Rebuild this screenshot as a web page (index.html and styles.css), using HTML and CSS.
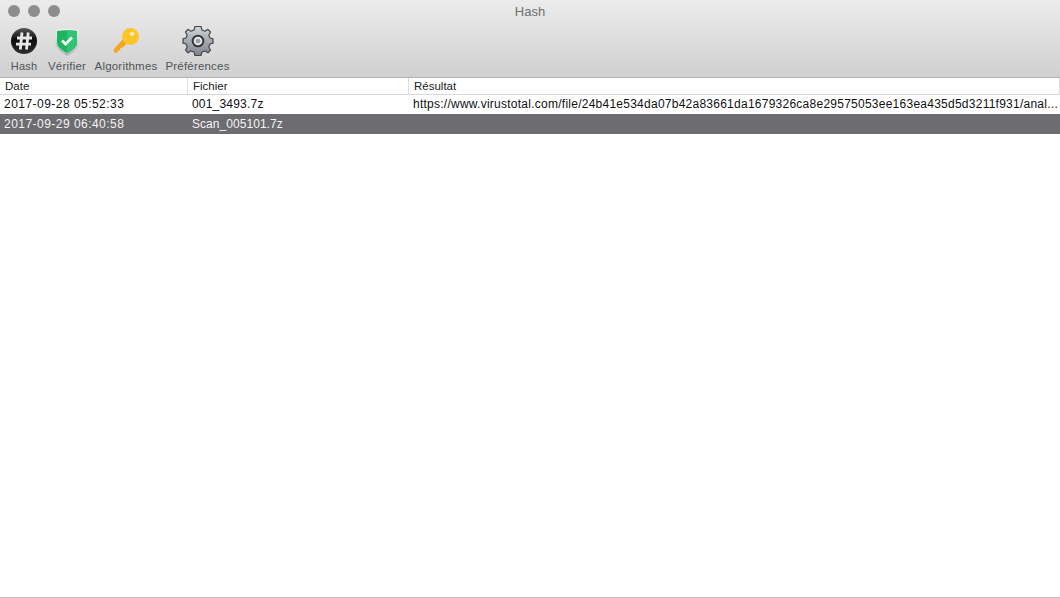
FILE: index.html
```html
<!DOCTYPE html>
<html lang="fr">
<head>
<meta charset="utf-8">
<title>Hash</title>
<link rel="stylesheet" href="styles.css">
</head>
<body>
<div class="window">
  <header class="chrome">
    <div class="titlebar">
      <div class="lights"><span class="light"></span><span class="light"></span><span class="light"></span></div>
      <div class="title">Hash</div>
    </div>
    <div class="toolbar">
      <div class="tool tool-hash">
        <svg class="icon" width="26" height="26" viewBox="0 0 26 26">
          <defs><linearGradient id="gb" x1="0" y1="0" x2="0" y2="1"><stop offset="0" stop-color="#585858"/><stop offset="0.45" stop-color="#0c0c0c"/><stop offset="1" stop-color="#303030"/></linearGradient></defs>
          <circle cx="13" cy="13" r="13" fill="url(#gb)"/>
          <path d="M11 4.500 9.300 21.500M17.200 4.500 15.500 21.500M6 10H21M5 16.200H20" stroke="#e8e8e8" stroke-width="2.800" fill="none"/>
        </svg>
        <span class="label">Hash</span>
      </div>
      <div class="tool tool-verify">
        <svg class="icon" width="24" height="28" viewBox="0 0 24 28">
          <defs><linearGradient id="gs" x1="0" y1="0" x2="0" y2="1"><stop offset="0" stop-color="#f0f1f2"/><stop offset="1" stop-color="#aeb4b8"/></linearGradient></defs>
          <path d="M0.500 1.500Q12 -.5 23.500 1.500V15C23.500 21 17 25 12 28 7 25 .5 21 .5 15Z" fill="url(#gs)"/>
          <path d="M2 3Q12 1.500 22 3V14.500C22 19 16.500 22.500 12 25 7.500 22.500 2 19 2 14.500Z" fill="#1db45e"/>
          <path d="M12 2.250Q17 2.250 22 3V14.500C22 19 16.500 22.500 12 25Z" fill="#2fc374"/>
          <path d="M7 12.500 10.500 16 17 9.500" stroke="#f4f7f4" stroke-width="2.800" fill="none"/>
        </svg>
        <span class="label">Vérifier</span>
      </div>
      <div class="tool tool-algo">
        <svg class="icon" width="26" height="25" viewBox="0 0 26 25">
          <path d="M10 11 .5 21.500 1.500 25 4.500 24.500 5 22.500 7 22.500 7.500 20 9.500 19.500 14.500 15Z" fill="#f2a81c"/>
          <circle cx="17.500" cy="8.500" r="8.500" fill="#fdc527"/>
          <ellipse cx="19" cy="5.800" rx="2.500" ry="1.900" fill="#fcefc4"/>
        </svg>
        <span class="label">Algorithmes</span>
      </div>
      <div class="tool tool-prefs">
        <svg class="icon" width="32" height="32" viewBox="0 0 32 32">
          <defs><linearGradient id="gg" x1="0" y1="0" x2="0" y2="1"><stop offset="0" stop-color="#d2d6da"/><stop offset="0.5" stop-color="#a4aab0"/><stop offset="1" stop-color="#80868c"/></linearGradient></defs>
          <path d="M13 1.500H19L20 5 23 6.300 26 4.300 28.500 7 26.800 10.300 28 13 31 13.800V18.200L28 19 26.800 22 28.500 25.200 26 27.800 23 26 20 27 19 30.500H13L12 27 9 26 6 27.800 3.500 25.200 5.200 22 4 19 1 18.200V13.800L4 13 5.200 10.300 3.500 7 6 4.300 9 6.300 12 5Z" fill="url(#gg)" stroke="#44484e" stroke-width="1.200" stroke-linejoin="round"/>
          <circle cx="16" cy="16" r="6.300" fill="#33373c"/>
          <circle cx="16" cy="16" r="4.300" fill="#f0f1f2"/>
          <circle cx="16" cy="16" r="2.500" fill="#9aa0a6"/>
        </svg>
        <span class="label">Préférences</span>
      </div>
    </div>
  </header>
  <main class="table">
    <div class="row head">
      <div class="cell c-date">Date</div>
      <div class="cell c-file">Fichier</div>
      <div class="cell c-res">Résultat</div>
    </div>
    <div class="row item">
      <div class="cell c-date">2017-09-28 05:52:33</div>
      <div class="cell c-file">001_3493.7z</div>
      <div class="cell c-res">https://www.virustotal.com/file/24b41e534da07b42a83661da1679326ca8e29575053ee163ea435d5d3211f931/anal...</div>
    </div>
    <div class="row item selected">
      <div class="cell c-date">2017-09-29 06:40:58</div>
      <div class="cell c-file">Scan_005101.7z</div>
      <div class="cell c-res"></div>
    </div>
  </main>
</div>
</body>
</html>
```
FILE: styles.css
```css
* { box-sizing: border-box; }
html, body { margin: 0; height: 100%; background: #fff; }
body { font-family: "Liberation Sans", Arial, sans-serif; color: #111; overflow: hidden; }
.window { height: 598px; display: flex; flex-direction: column; border-bottom: 1px solid #c4c4c4; }
.chrome { height: 78px; flex: none; background: linear-gradient(#ececec, #d0d0d0); border-bottom: 1px solid #b2b2b2; }
.titlebar { height: 23px; position: relative; display: flex; align-items: center; justify-content: center; }
.lights { position: absolute; left: 8px; top: 5px; display: flex; gap: 8px; }
.light { width: 12px; height: 12px; border-radius: 50%; background: #8e8c8e; }
.title { font-size: 13px; color: #6e6e6e; }
.toolbar { display: flex; height: 54px; padding-left: 5px; }
.tool { display: flex; flex-direction: column; align-items: center; justify-content: flex-end; height: 50px; }
.tool-hash { width: 38px; }
.tool-verify { width: 48px; }
.tool-algo { width: 70px; }
.tool-prefs { width: 73px; }
.icon { flex: none; display: block; }
.tool-hash .icon { margin-bottom: 6px; }
.tool-verify .icon { margin-bottom: 4px; }
.tool-algo .icon { margin-bottom: 7px; }
.tool-prefs .icon { margin-bottom: 3px; }
.label { font-size: 11.5px; line-height: 13px; color: #505458; white-space: nowrap; letter-spacing: .2px; }
.tool-hash .label { font-size: 11px; }
.table { flex: 1; }
.row { display: flex; }
.head { height: 17px; border-bottom: 1px solid #d8d8d8; font-size: 11.5px; line-height: 16px; color: #222; }
.head .c-date { padding-left: 5px; }
.head .c-file { padding-left: 5px; border-left: 1px solid #dcdcdc; }
.head .c-res { padding-left: 5px; border-left: 1px solid #dcdcdc; border-right: 1px solid #dcdcdc; }
.item { height: 19px; font-size: 12px; line-height: 18px; }
.item.selected { height: 20px; line-height: 20px; background: #6d6c70; color: #f4f4f4; }
.cell { flex: none; white-space: nowrap; }
.c-date { width: 187px; }
.c-file { width: 221px; }
.c-res { width: 652px; }
.item .c-date { padding-left: 4px; letter-spacing: .47px; }
.item .c-file { padding-left: 5px; letter-spacing: .2px; }
.item.selected .c-file { letter-spacing: .05px; }
.item .c-res { padding-left: 5px; letter-spacing: .25px; }
```
